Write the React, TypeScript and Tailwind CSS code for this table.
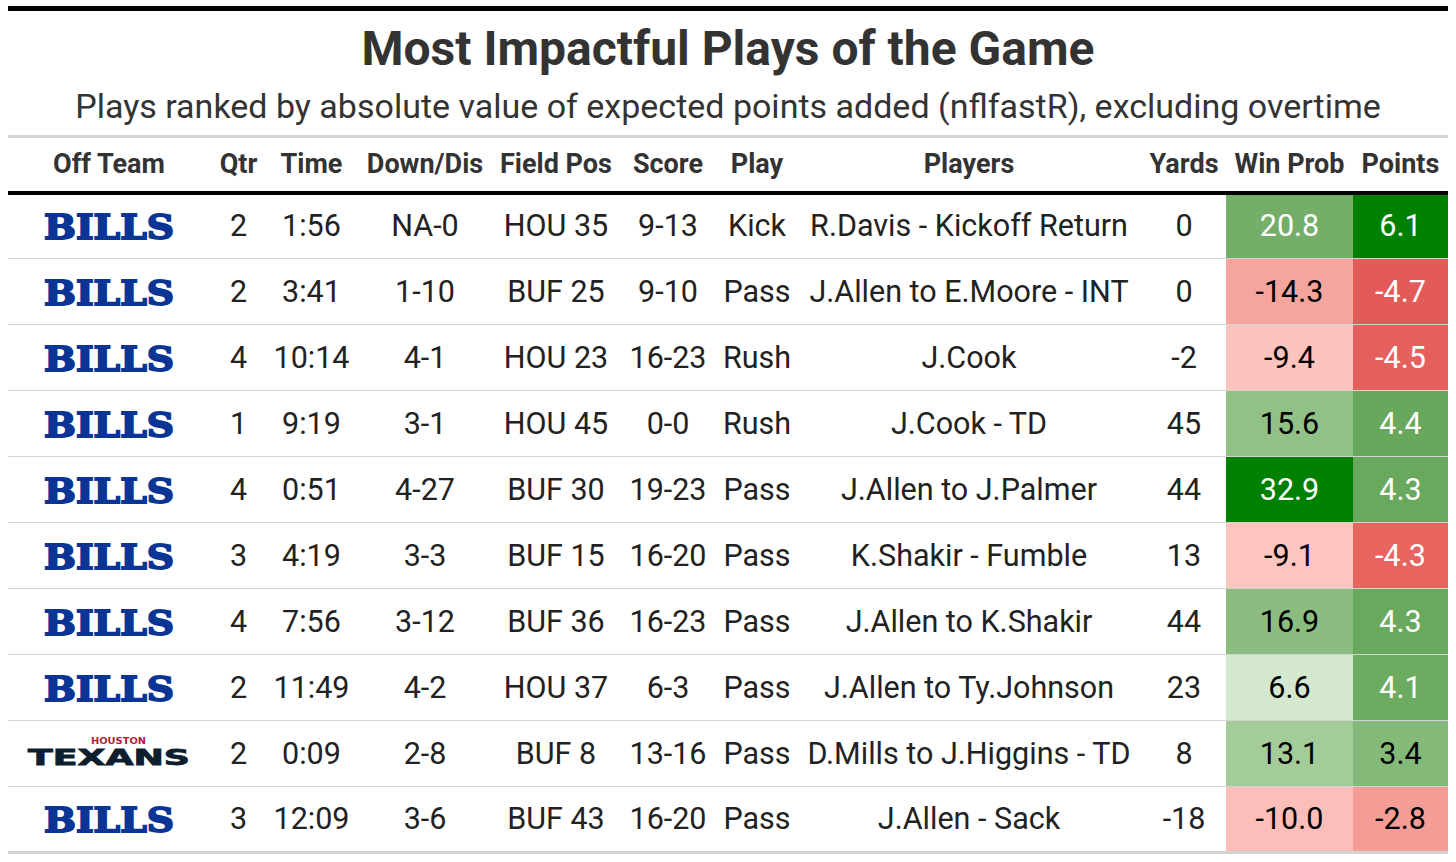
import React from "react";

type Row = {
  team: "BUF" | "HOU";
  qtr: string;
  time: string;
  down: string;
  field: string;
  score: string;
  play: string;
  players: string;
  yards: string;
  wp: string;
  wpBg: string;
  wpText: string;
  pts: string;
  ptsBg: string;
  ptsText: string;
};

const ROWS: Row[] = [
  { team: "BUF", qtr: "2", time: "1:56", down: "NA-0", field: "HOU 35", score: "9-13", play: "Kick", players: "R.Davis - Kickoff Return", yards: "0", wp: "20.8", wpBg: "bg-[#75ae69]", wpText: "text-white", pts: "6.1", ptsBg: "bg-[#008000]", ptsText: "text-white" },
  { team: "BUF", qtr: "2", time: "3:41", down: "1-10", field: "BUF 25", score: "9-10", play: "Pass", players: "J.Allen to E.Moore - INT", yards: "0", wp: "-14.3", wpBg: "bg-[#f6a49e]", wpText: "text-black", pts: "-4.7", ptsBg: "bg-[#e35b58]", ptsText: "text-white" },
  { team: "BUF", qtr: "4", time: "10:14", down: "4-1", field: "HOU 23", score: "16-23", play: "Rush", players: "J.Cook", yards: "-2", wp: "-9.4", wpBg: "bg-[#fcc4bf]", wpText: "text-black", pts: "-4.5", ptsBg: "bg-[#e5605d]", ptsText: "text-white" },
  { team: "BUF", qtr: "1", time: "9:19", down: "3-1", field: "HOU 45", score: "0-0", play: "Rush", players: "J.Cook - TD", yards: "45", wp: "15.6", wpBg: "bg-[#92c187]", wpText: "text-black", pts: "4.4", ptsBg: "bg-[#67a85c]", ptsText: "text-white" },
  { team: "BUF", qtr: "4", time: "0:51", down: "4-27", field: "BUF 30", score: "19-23", play: "Pass", players: "J.Allen to J.Palmer", yards: "44", wp: "32.9", wpBg: "bg-[#008000]", wpText: "text-white", pts: "4.3", ptsBg: "bg-[#69a95e]", ptsText: "text-white" },
  { team: "BUF", qtr: "3", time: "4:19", down: "3-3", field: "BUF 15", score: "16-20", play: "Pass", players: "K.Shakir - Fumble", yards: "13", wp: "-9.1", wpBg: "bg-[#fcc5c0]", wpText: "text-black", pts: "-4.3", ptsBg: "bg-[#e7645f]", ptsText: "text-white" },
  { team: "BUF", qtr: "4", time: "7:56", down: "3-12", field: "BUF 36", score: "16-23", play: "Pass", players: "J.Allen to K.Shakir", yards: "44", wp: "16.9", wpBg: "bg-[#8abd7f]", wpText: "text-black", pts: "4.3", ptsBg: "bg-[#69a95e]", ptsText: "text-white" },
  { team: "BUF", qtr: "2", time: "11:49", down: "4-2", field: "HOU 37", score: "6-3", play: "Pass", players: "J.Allen to Ty.Johnson", yards: "23", wp: "6.6", wpBg: "bg-[#d4e7cf]", wpText: "text-black", pts: "4.1", ptsBg: "bg-[#6dab61]", ptsText: "text-white" },
  { team: "HOU", qtr: "2", time: "0:09", down: "2-8", field: "BUF 8", score: "13-16", play: "Pass", players: "D.Mills to J.Higgins - TD", yards: "8", wp: "13.1", wpBg: "bg-[#a3cc99]", wpText: "text-black", pts: "3.4", ptsBg: "bg-[#84ba79]", ptsText: "text-black" },
  { team: "BUF", qtr: "3", time: "12:09", down: "3-6", field: "BUF 43", score: "16-20", play: "Pass", players: "J.Allen - Sack", yards: "-18", wp: "-10.0", wpBg: "bg-[#fbbeb9]", wpText: "text-black", pts: "-2.8", ptsBg: "bg-[#f49d97]", ptsText: "text-black" },
];

const HEADERS = ["Off Team", "Qtr", "Time", "Down/Dis", "Field Pos", "Score", "Play", "Players", "Yards", "Win Prob", "Points"];
const WIDTHS = [202, 57, 89, 138, 124, 100, 78, 346, 84, 127, 95];

function BillsLogo() {
  return (
    <svg width="132" height="34" viewBox="0 0 132 34" className="mx-auto block overflow-visible">
      <text
        x="1"
        y="29.5"
        textLength="130"
        lengthAdjust="spacingAndGlyphs"
        fontFamily="'DejaVu Serif', 'Liberation Serif', serif"
        fontWeight="900"
        fontSize="34"
        fill="#0a3595"
        stroke="#0a3595"
        strokeWidth="1.8"
      >
        BILLS
      </text>
    </svg>
  );
}

function TexansLogo() {
  return (
    <svg width="164" height="32" viewBox="0 0 164 32" className="mx-auto block overflow-visible">
      <text
        x="64"
        y="5.5"
        textLength="55"
        lengthAdjust="spacingAndGlyphs"
        fontFamily="'DejaVu Sans', sans-serif"
        fontWeight="700"
        fontSize="8"
        fill="#b0203a"
      >
        HOUSTON
      </text>
      <text
        x="1"
        y="27"
        textLength="162"
        lengthAdjust="spacingAndGlyphs"
        fontFamily="'DejaVu Sans', sans-serif"
        fontWeight="700"
        fontSize="20.5"
        fill="#0d1f2f"
        stroke="#0d1f2f"
        strokeWidth="0.8"
      >
        TEXANS
      </text>
    </svg>
  );
}

export default function App() {
  return (
    <div className="min-h-[862px] bg-white font-['Roboto',sans-serif] text-[#333333]">
      <div className="mx-auto w-[1440px] pt-[6px]">
        <div className="border-t-[5px] border-black">
          <div className="pt-[10px] text-center text-[48px] font-bold leading-[56px] text-[#333333]">
            Most Impactful Plays of the Game
          </div>
          <div className="pb-[3px] pt-[3px] text-center text-[34px] leading-[52px] text-[#333333]">
            Plays ranked by absolute value of expected points added (nflfastR), excluding overtime
          </div>
        </div>
        <table className="w-[1440px] table-fixed border-collapse">
          <colgroup>
            {WIDTHS.map((w, i) => (
              <col key={i} style={{ width: w }} />
            ))}
          </colgroup>
          <thead>
            <tr className="border-t-[3px] border-b-[4px] border-t-[#d3d3d3] border-b-black">
              {HEADERS.map((h) => (
                <th key={h} className="h-[56px] whitespace-nowrap p-0 text-center align-middle text-[27px] font-bold text-[#333333]">
                  {h}
                </th>
              ))}
            </tr>
          </thead>
          <tbody className="border-b-[3px] border-[#d3d3d3]">
            {ROWS.map((r, i) => (
              <tr key={i} className={i === 0 ? "" : "border-t border-[#d3d3d3]"}>
                <td className="h-[66px] p-0 align-middle">
                  {r.team === "BUF" ? <BillsLogo /> : <TexansLogo />}
                </td>
                {[r.qtr, r.time, r.down, r.field, r.score, r.play, r.players, r.yards].map((v, j) => (
                  <td key={j} className="h-[66px] whitespace-nowrap p-0 text-center align-middle text-[30.5px] text-[#222222]">
                    {v}
                  </td>
                ))}
                <td className={`h-[66px] p-0 text-center align-middle text-[30.5px] ${r.wpBg} ${r.wpText}`}>{r.wp}</td>
                <td className={`h-[66px] p-0 text-center align-middle text-[30.5px] ${r.ptsBg} ${r.ptsText}`}>{r.pts}</td>
              </tr>
            ))}
          </tbody>
        </table>
      </div>
    </div>
  );
}
